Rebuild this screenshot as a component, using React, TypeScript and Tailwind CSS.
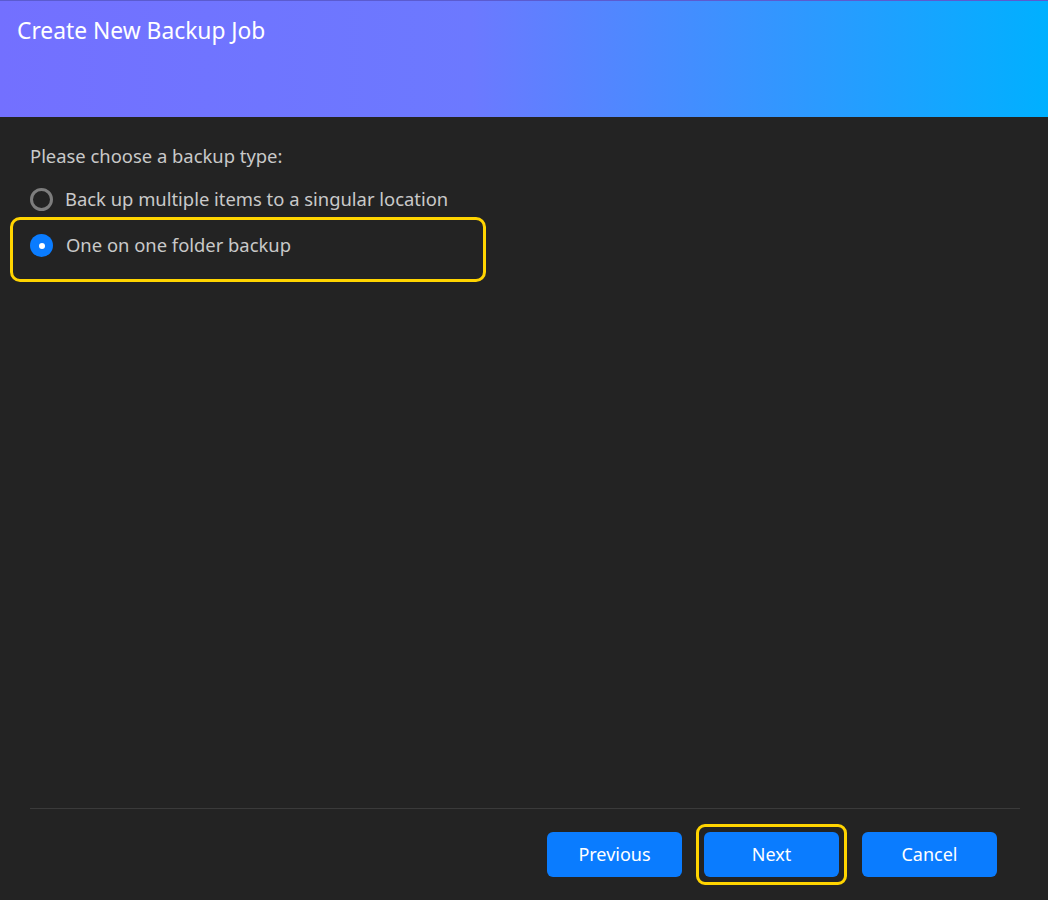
import React from "react";

export default function App() {
  const font = { fontFamily: '"Noto Sans", "Open Sans", sans-serif' };
  return (
    <div className="w-[1048px] h-[900px] flex flex-col bg-[#232323]" style={font}>
      <div className="h-[117px] shrink-0 border-t border-[#5b5bd0] bg-[linear-gradient(90deg,#7370ff_0%,#6c79ff_45%,#00b0ff_100%)] px-[17px] pt-[15px]">
        <div className="text-[22.8px] text-white leading-[30px]">Create New Backup Job</div>
      </div>
      <div className="flex-1 flex flex-col px-[30px] pt-[26px]">
        <div className="text-[18.4px] text-[#c9c9c9] leading-[26px]">Please choose a backup type:</div>
        <div className="mt-[12px] flex items-center gap-[12px] h-[36px]">
          <span className="w-[23px] h-[23px] rounded-full border-[3px] border-[#7d7d7d] shrink-0" />
          <span className="text-[18.4px] text-[#c9c9c9]">Back up multiple items to a singular location</span>
        </div>
        <div className="-ml-[20px] w-[476px] h-[65px] rounded-[10px] border-[3px] border-[#ffd400] flex items-start pt-[11px] pl-[17px] gap-[13px]">
          <span className="w-[23px] h-[23px] rounded-full bg-[#0a7cff] flex items-center justify-center shrink-0 mt-[3px]">
            <span className="w-[6px] h-[6px] rounded-full bg-white" />
          </span>
          <span className="text-[18.4px] text-[#c9c9c9] leading-[28px]">One on one folder backup</span>
        </div>
        <div className="flex-1" />
        <div className="h-px bg-[#3a3a3a] mr-[-2px]" />
        <div className="flex justify-end items-center gap-[14px] pr-[21px] h-[91px] pb-[1px]">
          <button className="w-[135px] h-[45px] rounded-[6px] bg-[#0a7cff] text-white text-[18px]">Previous</button>
          <div className="rounded-[9px] border-[3px] border-[#ffd400] p-[5px]">
            <button className="w-[135px] h-[45px] rounded-[6px] bg-[#0a7cff] text-white text-[18px] block">Next</button>
          </div>
          <button className="w-[135px] h-[45px] rounded-[6px] bg-[#0a7cff] text-white text-[18px] ml-[1px]">Cancel</button>
        </div>
      </div>
    </div>
  );
}
